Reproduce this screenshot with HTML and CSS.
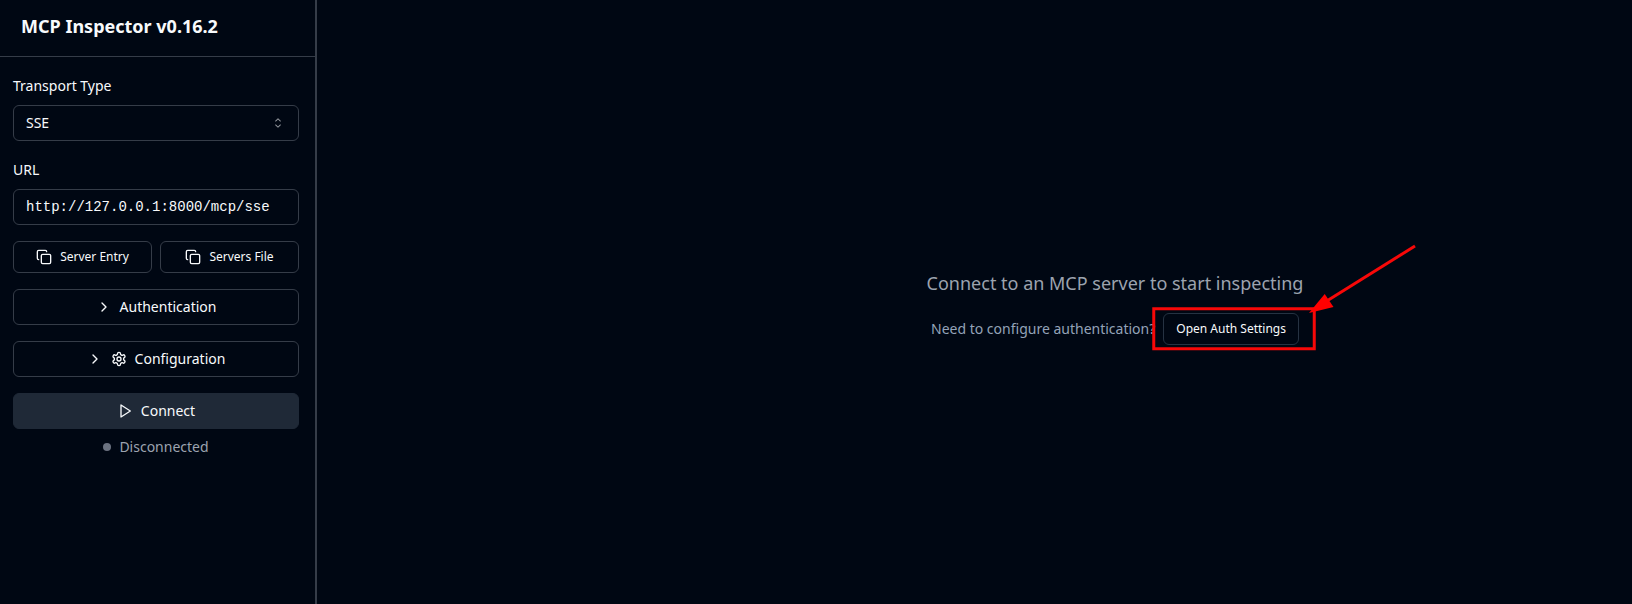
FILE: index.html
```html
<!DOCTYPE html>
<html lang="en">
<head>
<meta charset="utf-8">
<title>MCP Inspector</title>
<link rel="stylesheet" href="styles.css">
</head>
<body>
<div class="app">
  <aside class="sidebar">
    <header class="header"><h1 class="title">MCP Inspector v0.16.2</h1></header>
    <div class="panel">
      <div class="field">
        <div class="label">Transport Type</div>
        <div class="control">SSE
          <svg class="chevrons" viewBox="0 0 15 15" fill="currentColor"><path fill-rule="evenodd" clip-rule="evenodd" d="M4.93179 5.43179C4.75605 5.60753 4.75605 5.89245 4.93179 6.06819C5.10753 6.24392 5.39245 6.24392 5.56819 6.06819L7.49999 4.13638L9.43179 6.06819C9.60753 6.24392 9.89245 6.24392 10.0682 6.06819C10.2439 5.89245 10.2439 5.60753 10.0682 5.43179L7.81819 3.18179C7.73379 3.0974 7.61933 3.04999 7.49999 3.04999C7.38064 3.04999 7.26618 3.0974 7.18179 3.18179L4.93179 5.43179ZM10.0682 9.56819C10.2439 9.39245 10.2439 9.10753 10.0682 8.93179C9.89245 8.75606 9.60753 8.75606 9.43179 8.93179L7.49999 10.8636L5.56819 8.93179C5.39245 8.75606 5.10753 8.75606 4.93179 8.93179C4.75605 9.10753 4.75605 9.39245 4.93179 9.56819L7.18179 11.8182C7.35753 11.9939 7.64245 11.9939 7.81819 11.8182L10.0682 9.56819Z"/></svg>
        </div>
      </div>
      <div class="field">
        <div class="label">URL</div>
        <div class="control mono">http://127.0.0.1:8000/mcp/sse</div>
      </div>
      <div class="pair">
        <button class="btn small"><svg class="icon" viewBox="0 0 24 24"><rect width="14" height="14" x="8" y="8" rx="2"/><path d="M4 16c-1.1 0-2-.9-2-2V4c0-1.1.9-2 2-2h10c1.1 0 2 .9 2 2"/></svg>Server Entry</button>
        <button class="btn small"><svg class="icon" viewBox="0 0 24 24"><rect width="14" height="14" x="8" y="8" rx="2"/><path d="M4 16c-1.1 0-2-.9-2-2V4c0-1.1.9-2 2-2h10c1.1 0 2 .9 2 2"/></svg>Servers File</button>
      </div>
      <button class="btn"><svg class="icon" viewBox="0 0 24 24"><path d="m9 18 6-6-6-6"/></svg>Authentication</button>
      <button class="btn"><svg class="icon" viewBox="0 0 24 24"><path d="m9 18 6-6-6-6"/></svg><svg class="icon" viewBox="0 0 24 24"><path d="M12.22 2h-.44a2 2 0 0 0-2 2v.18a2 2 0 0 1-1 1.73l-.43.25a2 2 0 0 1-2 0l-.15-.08a2 2 0 0 0-2.73.73l-.22.38a2 2 0 0 0 .73 2.73l.15.1a2 2 0 0 1 1 1.72v.51a2 2 0 0 1-1 1.74l-.15.09a2 2 0 0 0-.73 2.73l.22.38a2 2 0 0 0 2.73.73l.15-.08a2 2 0 0 1 2 0l.43.25a2 2 0 0 1 1 1.73V20a2 2 0 0 0 2 2h.44a2 2 0 0 0 2-2v-.18a2 2 0 0 1 1-1.73l.43-.25a2 2 0 0 1 2 0l.15.08a2 2 0 0 0 2.73-.73l.22-.39a2 2 0 0 0-.73-2.73l-.15-.08a2 2 0 0 1-1-1.74v-.5a2 2 0 0 1 1-1.74l.15-.09a2 2 0 0 0 .73-2.73l-.22-.38a2 2 0 0 0-2.73-.73l-.15.08a2 2 0 0 1-2 0l-.43-.25a2 2 0 0 1-1-1.73V4a2 2 0 0 0-2-2z"/><circle cx="12" cy="12" r="3"/></svg>Configuration</button>
      <div class="connection">
        <button class="btn primary"><svg class="icon" viewBox="0 0 24 24"><polygon points="6 3 20 12 6 21 6 3"/></svg>Connect</button>
        <div class="status"><span class="dot"></span>Disconnected</div>
      </div>
    </div>
  </aside>
  <main class="main">
    <p class="hint">Connect to an MCP server to start inspecting</p>
    <div class="auth"><span>Need to configure authentication?</span><button class="btn small open">Open Auth Settings</button></div>
  </main>
  <svg class="annotation" viewBox="0 0 1632 604">
    <rect x="1153.75" y="308.75" width="160.5" height="40"/>
    <path class="shaft" d="M1415 246 1326 301.500"/>
    <path class="head" d="M1309 313 1324.700 294 1333.500 307Z"/>
  </svg>
</div>
</body>
</html>
```
FILE: styles.css
```css
* { box-sizing: border-box; }
body {
  margin: 0;
  background: #000713;
  color: #f8fafc;
  font: 14px/20px "Noto Sans", sans-serif;
}
.app { position: relative; display: flex; height: 604px; overflow: hidden; }
.sidebar { width: 317px; flex: none; border-right: 2px solid #353c48; }
.header { height: 57px; padding: 12px 21px 0; border-bottom: 1px solid #353c48; }
.title { margin: 0; font-size: 18px; line-height: 28px; font-weight: 700; }
.panel { display: flex; flex-direction: column; gap: 16px; padding: 16px 16px 16px 13px; }
.field { display: flex; flex-direction: column; gap: 8px; }
.label { line-height: 24px; height: 24px; padding-top: 1px; }
.control {
  display: flex;
  align-items: center;
  justify-content: space-between;
  height: 36px;
  padding: 0 12px;
  border: 1px solid #353c48;
  border-radius: 6px;
}
.mono { font-family: "Liberation Mono", monospace; }
.chevrons { width: 16px; height: 16px; opacity: .6; }
.pair { display: grid; grid-template-columns: 1fr 1fr; gap: 8px; }
.btn {
  display: flex;
  align-items: center;
  justify-content: center;
  gap: 8px;
  width: 100%;
  height: 36px;
  padding: 0;
  border: 1px solid #353c48;
  border-radius: 6px;
  background: none;
  color: inherit;
  font: inherit;
}
.small { height: 32px; font-size: 12px; }
.icon {
  width: 16px;
  height: 16px;
  flex: none;
  fill: none;
  stroke: currentColor;
  stroke-width: 2;
  stroke-linecap: round;
  stroke-linejoin: round;
}
.connection { display: flex; flex-direction: column; gap: 8px; }
.primary { background: #1f2937; border-color: #1f2937; }
.status { display: flex; align-items: center; justify-content: center; gap: 8px; color: #9ca3af; }
.dot { width: 8px; height: 8px; border-radius: 50%; background: #6b7280; }
.main {
  display: flex;
  flex: none;
  flex-direction: column;
  align-items: center;
  gap: 16px;
  width: 1596px;
  padding-top: 269px;
}
.hint { margin: 0; font-size: 18px; line-height: 28px; color: #9ca3af; }
.auth { display: flex; align-items: center; gap: 8px; color: #94a3b8; }
.open { width: auto; padding: 0 12px; border-color: #263242; color: #f8fafc; }
.annotation { position: absolute; left: 0; top: 0; width: 1632px; height: 604px; pointer-events: none; }
.annotation rect, .shaft { fill: none; stroke: #f70808; stroke-width: 3; }
.head { fill: #ff0000; }
```
